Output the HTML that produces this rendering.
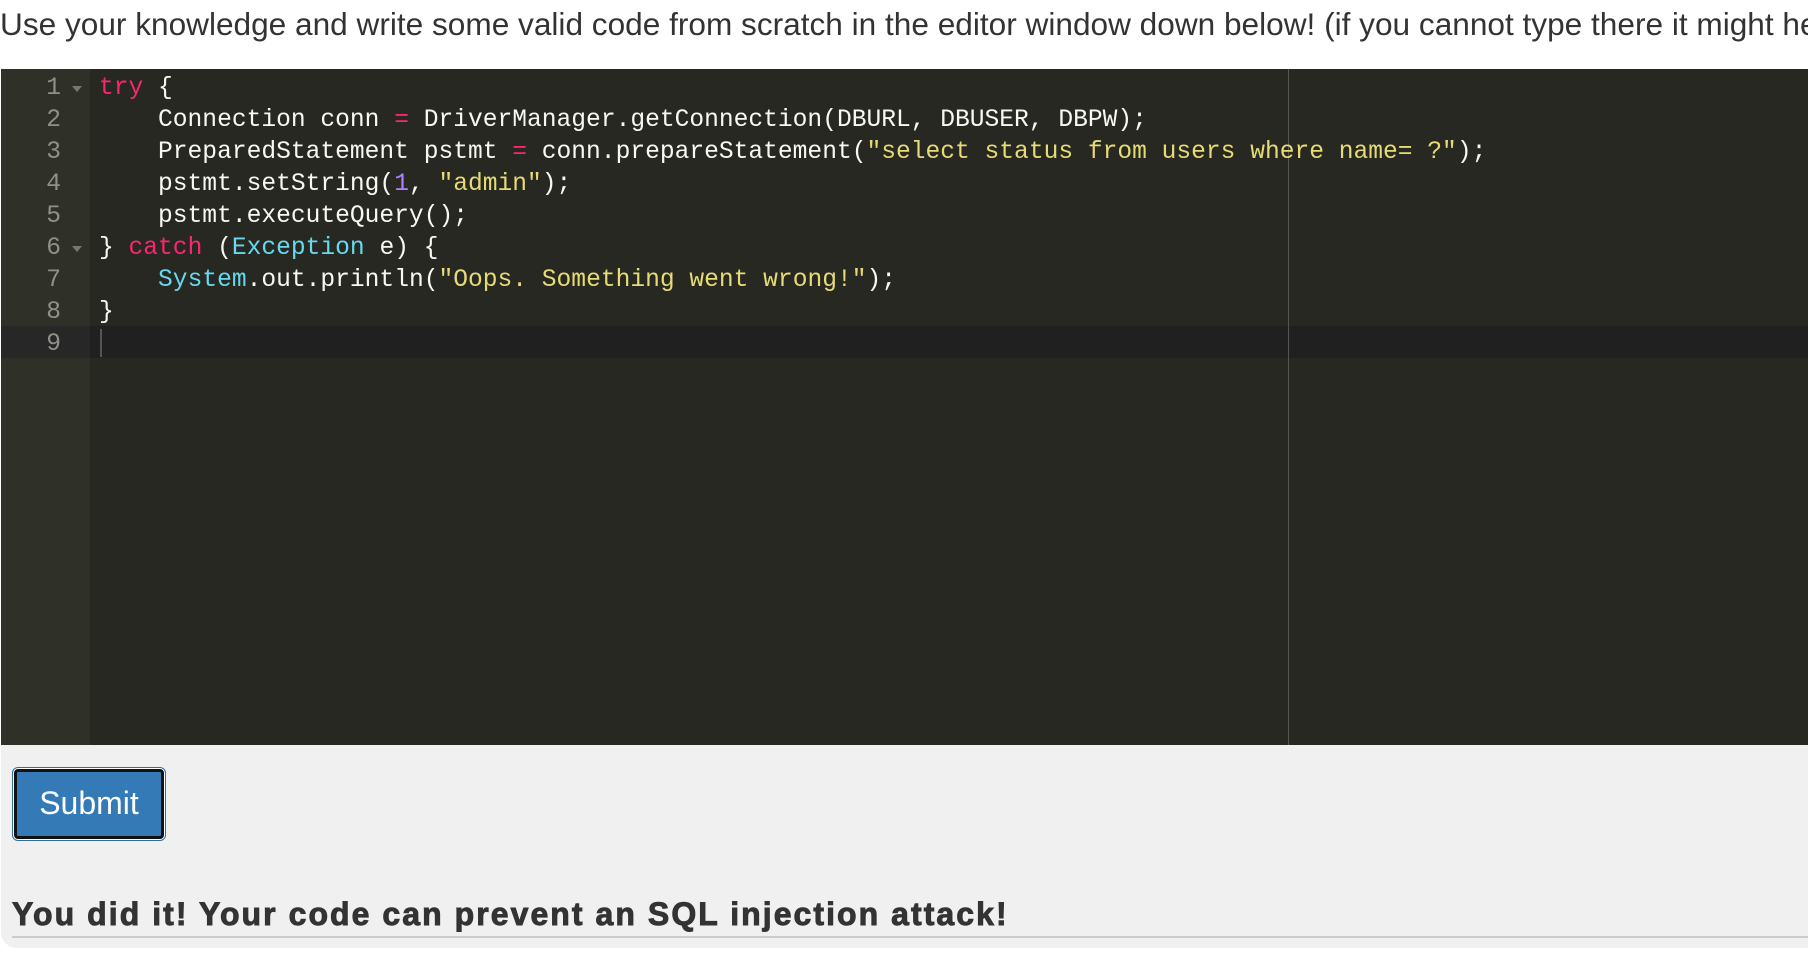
<!DOCTYPE html>
<html><head><meta charset="utf-8"><style>
html,body{margin:0;padding:0;background:#fff;width:1808px;height:954px;overflow:hidden;}
.top{position:absolute;left:0;top:6px;font:31.6px "Liberation Sans",sans-serif;color:#333;white-space:nowrap;}
.ed{position:absolute;left:1px;top:69px;width:1807px;height:676px;background:#272822;}
.gut{position:absolute;left:0;top:0;width:89px;height:676px;background:#2f3129;}
.pm{position:absolute;left:1287px;top:0;width:1px;height:676px;background:#555651;}
.act{position:absolute;left:0;top:257px;width:1807px;height:32px;background:#202020;}
.actg{position:absolute;left:0;top:257px;width:89px;height:32px;background:#272727;}
.ln{position:absolute;left:0;width:60px;text-align:right;color:#8f908a;font:24.6px "Liberation Mono",monospace;line-height:32px;}
.fold{position:absolute;left:71px;width:0;height:0;border-left:5px solid transparent;border-right:5px solid transparent;border-top:6px solid #777;}
.code{position:absolute;left:98px;top:4px;font:24.6px "Liberation Mono",monospace;line-height:32px;color:#f8f8f2;white-space:pre;}
.k{color:#f92672}.s{color:#e6db74}.n{color:#ae81ff}.t{color:#66d9ef}
.cur{position:absolute;left:99px;top:260px;width:2px;height:28px;background:#555;}
.panel{position:absolute;left:1px;top:745px;width:1807px;height:203px;background:#f0f0f0;border-bottom-left-radius:16px;}
.btn{position:absolute;left:12px;top:767px;width:154px;height:74px;border:1px solid #2e6da4;border-radius:6px;box-sizing:border-box;background:#fff;}
.btn div{position:absolute;left:1px;top:1px;right:1px;bottom:1px;border:3px solid #111;border-radius:4px;background:#337ab7;color:#fff;font:32px "Liberation Sans",sans-serif;text-align:center;line-height:62px;}
.res{position:absolute;left:12px;top:896px;font:bold 32px "Liberation Sans",sans-serif;color:#333;white-space:nowrap;letter-spacing:2.05px;-webkit-text-stroke:0.9px #333;}
.hr{position:absolute;left:12px;top:936px;width:1796px;height:2px;background:#ccc;}
</style></head><body>
<div class="top">Use your knowledge and write some valid code from scratch in the editor window down below! (if you cannot type there it might help</div>
<div class="ed">
<div class="gut"></div>
<div class="act"></div><div class="actg"></div>
<div class="pm"></div>
<div class="ln" style="top:4px">1</div><div class="fold" style="top:17px"></div>
<div class="ln" style="top:36px">2</div>
<div class="ln" style="top:68px">3</div>
<div class="ln" style="top:100px">4</div>
<div class="ln" style="top:132px">5</div>
<div class="ln" style="top:164px">6</div><div class="fold" style="top:177px"></div>
<div class="ln" style="top:196px">7</div>
<div class="ln" style="top:228px">8</div>
<div class="ln" style="top:260px">9</div>
<div class="code"><span class="k">try</span> {
    Connection conn <span class="k">=</span> DriverManager.getConnection(DBURL, DBUSER, DBPW);
    PreparedStatement pstmt <span class="k">=</span> conn.prepareStatement(<span class="s">"select status from users where name= ?"</span>);
    pstmt.setString(<span class="n">1</span>, <span class="s">"admin"</span>);
    pstmt.executeQuery();
} <span class="k">catch</span> (<span class="t">Exception</span> e) {
    <span class="t">System</span>.out.println(<span class="s">"Oops. Something went wrong!"</span>);
}
</div>
<div class="cur"></div>
</div>
<div class="panel"></div>
<div class="btn"><div>Submit</div></div>
<div class="res">You did it! Your code can prevent an SQL injection attack!</div>
<div class="hr"></div>
</body></html>
